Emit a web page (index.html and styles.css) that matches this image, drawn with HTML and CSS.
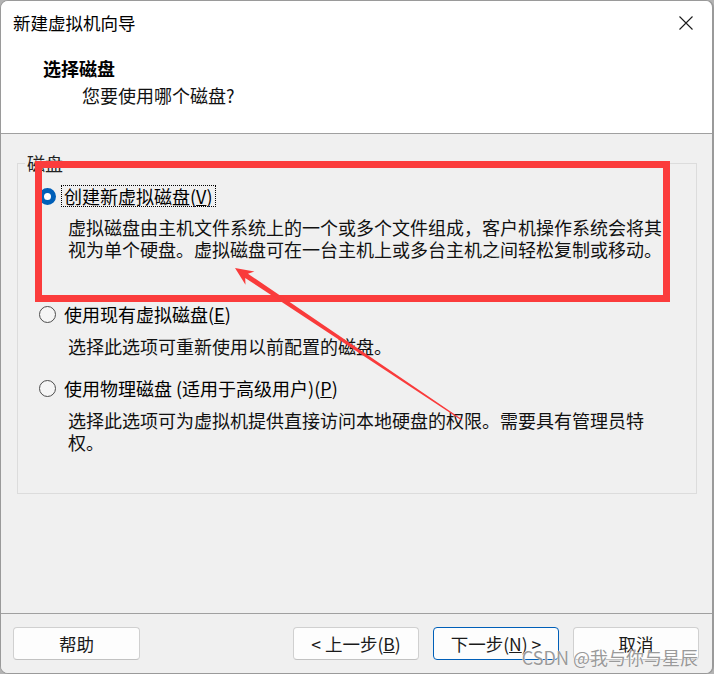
FILE: index.html
```html
<!DOCTYPE html>
<html lang="zh-CN">
<head>
<meta charset="utf-8">
<title>新建虚拟机向导</title>
<link rel="stylesheet" href="styles.css">
</head>
<body>
<div class="window">
  <div class="header">
    <div class="titlebar">
      <span class="title">新建虚拟机向导</span>
      <svg class="close" width="16" height="16" viewBox="0 0 16 16"><path d="M1.5 1.5 L14.5 14.5 M14.5 1.5 L1.5 14.5" stroke="#1b1b1b" stroke-width="1.1" fill="none"/></svg>
    </div>
    <div class="heading">选择磁盘</div>
    <div class="subheading">您要使用哪个磁盘?</div>
  </div>
  <div class="content">
    <fieldset class="group">
      <legend>磁盘</legend>
      <div class="option first">
        <span class="radio checked"></span>
        <span class="label focus">创建新虚拟磁盘(<u>V</u>)</span>
      </div>
      <p class="desc d1">虚拟磁盘由主机文件系统上的一个或多个文件组成，客户机操作系统会将其视为单个硬盘。虚拟磁盘可在一台主机上或多台主机之间轻松复制或移动。</p>
      <div class="option second">
        <span class="radio"></span>
        <span class="label">使用现有虚拟磁盘(<u>E</u>)</span>
      </div>
      <p class="desc">选择此选项可重新使用以前配置的磁盘。</p>
      <div class="option third">
        <span class="radio"></span>
        <span class="label">使用物理磁盘 (适用于高级用户)(<u>P</u>)</span>
      </div>
      <p class="desc">选择此选项可为虚拟机提供直接访问本地硬盘的权限。需要具有管理员特权。</p>
    </fieldset>
  </div>
  <div class="footer">
    <button class="btn help">帮助</button>
    <div class="spacer"></div>
    <button class="btn">&lt; 上一步(<u>B</u>)</button>
    <button class="btn default">下一步(<u>N</u>) &gt;</button>
    <button class="btn">取消</button>
  </div>
  <div class="highlight"></div>
  <svg class="arrow" width="714" height="674" viewBox="0 0 714 674">
    <polygon points="235,268 254.4,271.4 248.0,273.7 462.3,419.6 461.7,420.4 245.2,277.9 245.5,284.7" fill="#f93b3b"/>
  </svg>
  <div class="watermark">CSDN @我与你与星辰</div>
</div>
</body>
</html>
```
FILE: styles.css
```css
html, body {
  margin: 0;
  padding: 0;
  background: #b3b3b3;
}
body {
  width: 714px;
  height: 674px;
  overflow: hidden;
  font-family: "Noto Sans CJK SC", "Noto Sans", sans-serif;
  color: #000;
}
.window {
  position: relative;
  width: 714px;
  height: 674px;
  box-sizing: border-box;
  border: 1px solid #9a9a9a;
  border-right-width: 2px;
  border-radius: 8px;
  background: #f0f0f0;
  overflow: hidden;
  display: flex;
  flex-direction: column;
}
.header {
  height: 133px;
  box-sizing: border-box;
  background: #fff;
  border-bottom: 1px solid #a0a0a0;
}
.titlebar {
  height: 43px;
  display: flex;
  align-items: center;
  justify-content: space-between;
  padding: 0 18px 0 12px;
}
.title {
  font-size: 17.5px;
  line-height: 22px;
  color: #000;
}
.close {
  display: block;
}
.heading {
  margin: 12px 0 0 42px;
  font-size: 18px;
  line-height: 24px;
  font-weight: bold;
}
.subheading {
  margin: 4px 0 0 81px;
  font-size: 18px;
  line-height: 22px;
  color: #111;
}
.content {
  flex: 1;
  padding: 19px 15px 0 16px;
}
.group {
  margin: 0;
  height: 341px;
  box-sizing: border-box;
  border: 1px solid #dcdcdc;
  padding: 12px 20px 0 21px;
  min-width: 0;
}
.group legend {
  margin-left: -14px;
  padding: 0 2px;
  font-size: 18px;
  line-height: 20px;
  color: #222;
}
.option {
  display: flex;
  align-items: center;
  gap: 5px;
  height: 22px;
  font-size: 18px;
}
.option.second { margin-top: 43px; }
.option.third { margin-top: 20px; }
.radio {
  width: 17px;
  height: 17px;
  box-sizing: border-box;
  border-radius: 50%;
  border: 1px solid #4d4d4d;
  background: #f5f5f5;
  flex: none;
}
.radio.checked {
  border: 5px solid #005fb8;
  background: #fff;
}
.label {
  line-height: 20px;
  padding: 0 2px;
  border: 1px dotted transparent;
  white-space: nowrap;
}
.label.focus {
  border-color: #000;
}
.desc {
  margin: 10px 0 0 29px;
  width: 600px;
  font-size: 18px;
  line-height: 22px;
  color: #111;
}
.desc.d1 { margin-top: 9px; }
.footer {
  height: 60px;
  box-sizing: border-box;
  border-top: 1px solid #a0a0a0;
  background: #f0f0f0;
  display: flex;
  align-items: flex-start;
  gap: 14px;
  padding: 13px 13px 0 12px;
}
.spacer { flex: 1; }
.btn {
  width: 126px;
  height: 33px;
  box-sizing: border-box;
  border: 1px solid #d0d0d0;
  border-bottom-color: #c2c2c2;
  border-radius: 4px;
  background: #fdfdfd;
  font-family: "Noto Sans CJK SC", "Noto Sans", sans-serif;
  font-size: 17.5px;
  line-height: 22px;
  color: #1a1a1a;
  padding: 0;
}
.btn.help { width: 127px; }
.btn.default {
  border: 1px solid #005fb8;
}
.highlight {
  position: absolute;
  left: 34px;
  top: 160px;
  width: 635px;
  height: 141px;
  box-sizing: border-box;
  border: 7px solid #fb3c3c;
  pointer-events: none;
}
.arrow {
  position: absolute;
  left: -1px;
  top: -1px;
  pointer-events: none;
}
.watermark {
  position: absolute;
  right: 14px;
  bottom: 6px;
  font-size: 18px;
  line-height: 20px;
  color: #9a9a9a;
  text-shadow: 0 0 1px #fff, 0 0 1px #fff;
  white-space: nowrap;
}
```
